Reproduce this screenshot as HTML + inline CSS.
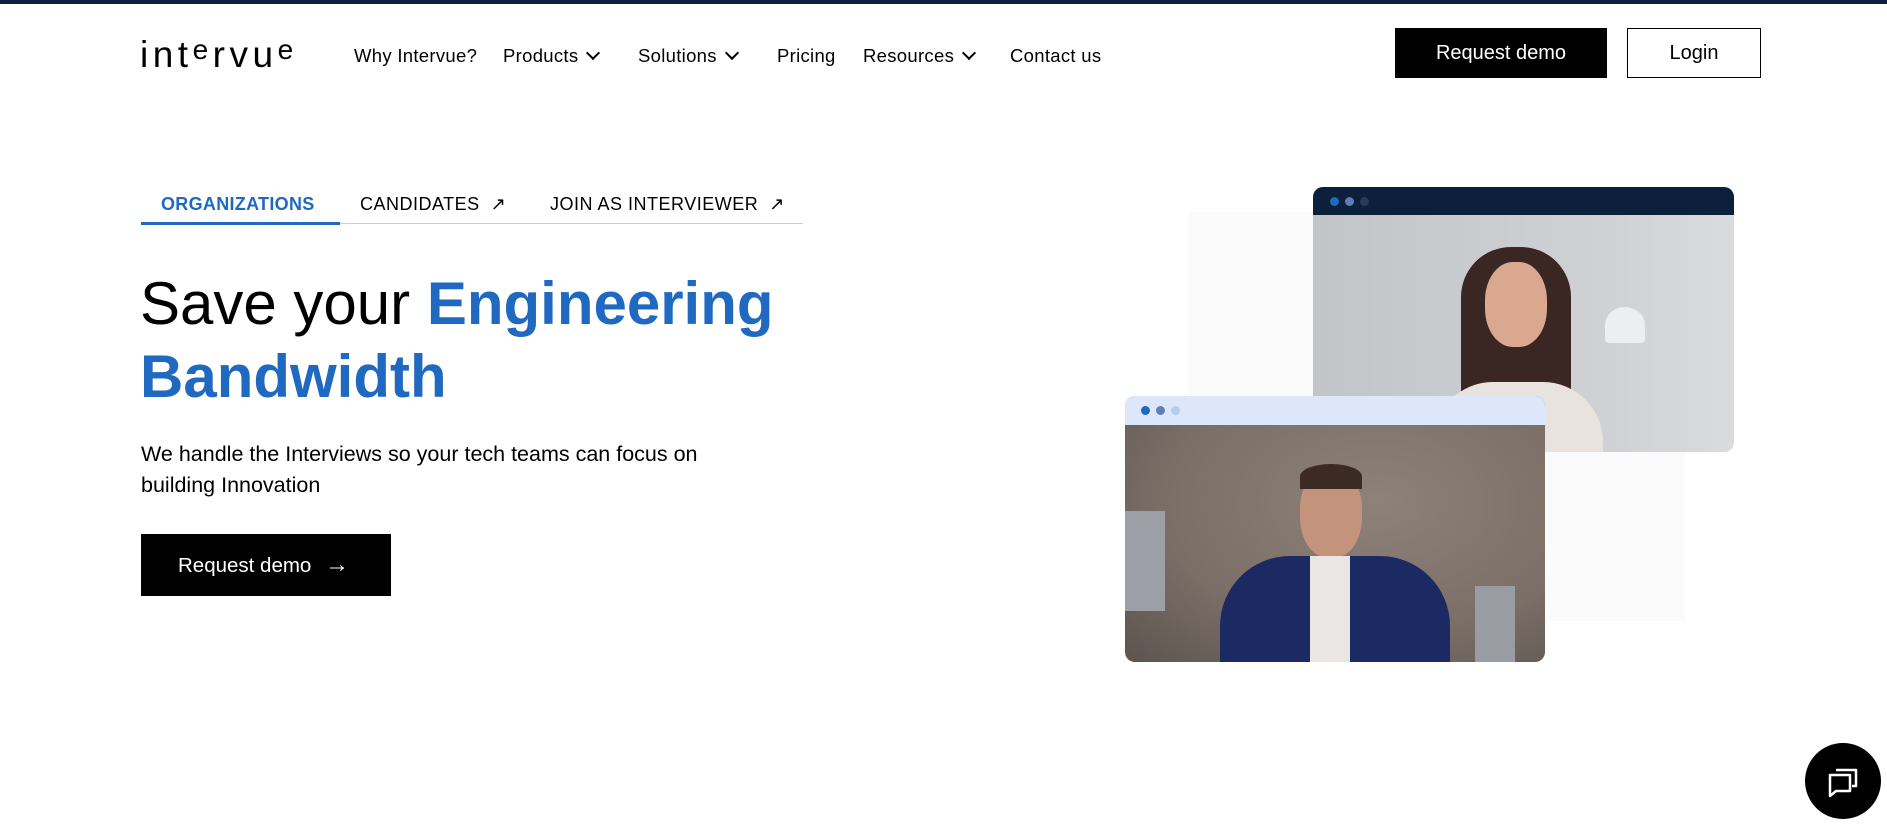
<!DOCTYPE html>
<html><head><meta charset="utf-8"><style>
*{margin:0;padding:0;box-sizing:border-box}
body{width:1887px;height:827px;overflow:hidden;background:#fff;font-family:"Liberation Sans",sans-serif;color:#000;position:relative}
.a{position:absolute}
.nav{font-size:18.5px;top:45px;white-space:nowrap;letter-spacing:0.3px}
.chev{display:inline-block;width:10px;height:10px;border-right:2px solid #000;border-bottom:2px solid #000;transform:rotate(45deg);margin-left:10px;position:relative;top:-4px}
.tab{font-size:18px;top:194px;white-space:nowrap;letter-spacing:0.5px}
.dot{position:absolute;width:9px;height:9px;border-radius:50%}
</style></head><body>
<div class="a" style="left:0;top:0;width:1887px;height:4px;background:#0c1f45"></div>
<div class="a" style="left:140px;top:34px;font-size:37px;letter-spacing:4.5px;font-weight:400">int<span style="position:relative;top:-8px;font-size:28px">e</span>rvu<span style="position:relative;top:-8px;font-size:28px">e</span></div>
<div class="a nav" style="left:354px">Why Intervue?</div>
<div class="a nav" style="left:503px">Products<span class="chev"></span></div>
<div class="a nav" style="left:638px">Solutions<span class="chev"></span></div>
<div class="a nav" style="left:777px">Pricing</div>
<div class="a nav" style="left:863px">Resources<span class="chev"></span></div>
<div class="a nav" style="left:1010px">Contact us</div>
<div class="a" style="left:1395px;top:28px;width:212px;height:50px;background:#000;color:#fff;font-size:20px;line-height:50px;text-align:center">Request demo</div>
<div class="a" style="left:1627px;top:28px;width:134px;height:50px;border:1px solid #000;font-size:20px;line-height:48px;text-align:center">Login</div>

<div class="a tab" style="left:161px;color:#1f69c1;font-weight:bold;letter-spacing:0.3px">ORGANIZATIONS</div>
<div class="a tab" style="left:360px">CANDIDATES &nbsp;↗</div>
<div class="a tab" style="left:550px">JOIN AS INTERVIEWER &nbsp;↗</div>
<div class="a" style="left:141px;top:223px;width:662px;height:1px;background:#ccc"></div>
<div class="a" style="left:141px;top:222px;width:199px;height:3px;background:#1f69c1"></div>

<div class="a" style="left:140px;top:267px;font-size:60px;line-height:73px;white-space:nowrap">Save your <b style="color:#1f69c1">Engineering</b><br><b style="color:#1f69c1">Bandwidth</b></div>
<div class="a" style="left:141px;top:439px;font-size:21.5px;line-height:31px;width:600px">We handle the Interviews so your tech teams can focus on building Innovation</div>
<div class="a" style="left:141px;top:534px;width:250px;height:62px;background:#000;color:#fff;font-size:20.5px;line-height:62px;padding-left:37px">Request demo <span style="margin-left:8px;font-size:24px">→</span></div>

<div class="a" style="left:1189px;top:212px;width:496px;height:409px;background:#fbfbfc"></div>
<div class="a" style="left:1313px;top:187px;width:421px;height:265px;border-radius:10px;overflow:hidden;background:linear-gradient(90deg,#c2c4c8,#cfd1d4 70%,#d9dbde)">
 <div class="a" style="left:0;top:0;width:100%;height:28px;background:#0c1f3b"></div>
 <div class="dot" style="left:17px;top:10px;background:#1f69c1"></div><div class="dot" style="left:32px;top:10px;background:#5a7eb3"></div><div class="dot" style="left:47px;top:10px;background:#283a5a"></div>
 <div class="a" style="left:148px;top:60px;width:110px;height:220px;border-radius:50px 50px 10px 10px;background:#3a2622"></div>
 <div class="a" style="left:172px;top:75px;width:62px;height:85px;border-radius:45%;background:#d9a88f"></div>
 <div class="a" style="left:120px;top:195px;width:170px;height:80px;border-radius:60px 60px 0 0;background:#e8e3df"></div>
 <div class="a" style="left:292px;top:120px;width:40px;height:36px;border-radius:50% 50% 10% 10%;background:#eceeef"></div>
</div>
<div class="a" style="left:1125px;top:396px;width:420px;height:266px;border-radius:10px;overflow:hidden;background:radial-gradient(ellipse at 60% 40%,#8e8179,#7a6e67 60%,#5c544f)">
 <div class="a" style="left:0;top:0;width:100%;height:29px;background:#dce7fc"></div>
 <div class="dot" style="left:16px;top:10px;background:#1f69c1"></div><div class="dot" style="left:31px;top:10px;background:#5f7fb0"></div><div class="dot" style="left:46px;top:10px;background:#b6cdea"></div>
 <div class="a" style="left:0;top:115px;width:40px;height:100px;background:#9c9fa6"></div>
 <div class="a" style="left:175px;top:72px;width:62px;height:90px;border-radius:45%;background:#c4937c"></div>
 <div class="a" style="left:175px;top:68px;width:62px;height:25px;border-radius:50% 50% 0 0;background:#3b2b22"></div>
 <div class="a" style="left:95px;top:160px;width:230px;height:120px;border-radius:70px 70px 0 0;background:#1b2a63"></div>
 <div class="a" style="left:185px;top:160px;width:40px;height:110px;background:#eae6e4"></div>
 <div class="a" style="left:350px;top:190px;width:40px;height:80px;background:#9a9ca3"></div>
</div>

<div class="a" style="left:1805px;top:743px;width:76px;height:76px;border-radius:50%;background:#000"></div>
<svg class="a" style="left:1826px;top:764px" width="34" height="34" viewBox="0 0 34 34" fill="none" stroke="#fff" stroke-width="2.5" stroke-linejoin="round"><path d="M10 6h20v16h-4"/><path d="M4 11h20v16H10l-6 5z"/></svg>
</body></html>
